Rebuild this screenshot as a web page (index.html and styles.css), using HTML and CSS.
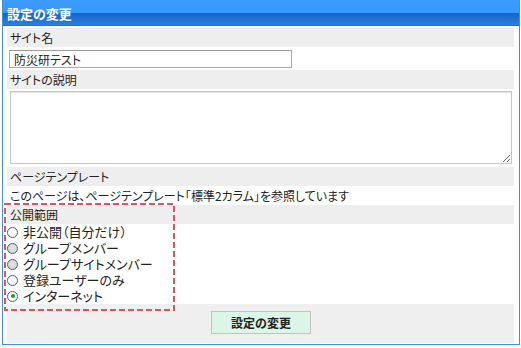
FILE: index.html
```html
<!DOCTYPE html>
<html lang="ja">
<head>
    <meta charset="UTF-8">
    <title>設定の変更</title>
    <link rel="stylesheet" href="styles.css">
</head>
<body>
    <div class="frame">
        <div class="title">設定の変更</div>

        <div class="panel">
            <div class="label">サイト名</div>
            <div class="field field-input">
                <input type="text" class="text" value="防災研テスト">
            </div>

            <div class="label">サイトの説明</div>
            <div class="field field-area">
                <textarea class="area"></textarea>
            </div>

            <div class="label">ページテンプレート</div>
            <div class="field field-text">このページは、ページテンプレート「標準2カラム」を参照しています</div>

            <div class="label">公開範囲</div>
            <div class="field radios">
                <label class="radio"><span class="dot"></span>非公開（自分だけ）</label>
                <label class="radio"><span class="dot off"></span>グループメンバー</label>
                <label class="radio"><span class="dot off"></span>グループサイトメンバー</label>
                <label class="radio"><span class="dot"></span>登録ユーザーのみ</label>
                <label class="radio"><span class="dot checked"></span>インターネット</label>
            </div>

            <div class="actions">
                <button class="submit">設定の変更</button>
            </div>
        </div>

        <!-- 注目枠 -->
        <svg class="highlight" width="171" height="108" viewBox="0 0 171 108">
            <rect x="1" y="1" width="169" height="106" fill="none" stroke="#e5505c" stroke-width="2" stroke-dasharray="6 3"/>
        </svg>
    </div>
</body>
</html>
```

FILE: styles.css
```css
body {
    margin: 0;
    background: #ffffff;
    font-family: "Noto Sans CJK JP", "Noto Sans", sans-serif;
    font-feature-settings: "palt";
    color: #222222;
}
.frame {
    position: relative;
    margin-left: 2px;
    width: 516px;
    height: 344px;
    border: 1px solid #3f8ee0;
    border-top: 0;
}
.title {
    height: 26px;
    box-sizing: border-box;
    padding-left: 4px;
    line-height: 27px;
    font-size: 13px;
    font-weight: bold;
    color: #ffffff;
    background: linear-gradient(#3c9bff 0, #3898fd 50%, #1764c9 54%, #2b80e2 100%);
    border-bottom: 1px solid #1e6fd2;
}
.panel {
    margin: 2px 5px 0 4px;
    width: 507px;
    height: 315px;
    background: #efefef;
    display: flex;
    flex-direction: column;
}
.label {
    height: 19px;
    line-height: 19px;
    padding-left: 3px;
    font-size: 12px;
    background: #eeeeee;
}
.field {
    background: #ffffff;
    font-size: 12px;
}
.field-input {
    height: 23px;
    padding: 3px 0 0 2px;
    box-sizing: border-box;
}
.text {
    width: 283px;
    height: 18px;
    box-sizing: border-box;
    margin: 0;
    padding: 0 0 0 4px;
    border: 1px solid #ababab;
    border-top-color: #9a9a9a;
    font-family: inherit;
    font-feature-settings: "palt";
    font-size: 12px;
    color: #222222;
    outline: none;
}
.field-area {
    height: 78px;
    padding: 2px 0 0 3px;
    box-sizing: border-box;
}
.area {
    display: block;
    width: 502px;
    height: 73px;
    box-sizing: border-box;
    margin: 0;
    border: 1px solid #c6c6c6;
    box-shadow: inset 0 1px 1px #e2e2e2;
}
.field-text {
    height: 19px;
    line-height: 19px;
    padding-left: 3px;
}
.radios {
    height: 80px;
    font-size: 13px;
}
.radio {
    display: flex;
    align-items: center;
    height: 16px;
    line-height: 16px;
    gap: 5px;
}
.dot {
    position: relative;
    flex: none;
    width: 11px;
    height: 11px;
    box-sizing: border-box;
    border: 1px solid #3d5f86;
    border-radius: 50%;
    background: #ffffff;
}
.dot.off {
    background: radial-gradient(#e4e4e4, #d2d2d2);
}
.dot.checked::after {
    content: "";
    position: absolute;
    left: 2.5px;
    top: 2.5px;
    width: 4px;
    height: 4px;
    border-radius: 50%;
    background: #1e9a2e;
}
.actions {
    flex: 1;
    display: flex;
    justify-content: center;
    align-items: flex-start;
    padding-top: 7px;
}
.submit {
    width: 100px;
    height: 23px;
    margin: 0 0 0 1px;
    padding: 0;
    border: 1px solid #c2c2c2;
    background: #dcf5e6;
    font-family: inherit;
    font-feature-settings: "palt";
    font-size: 12px;
    font-weight: bold;
    color: #222222;
}
.highlight {
    position: absolute;
    left: 1px;
    top: 203px;
}
```
